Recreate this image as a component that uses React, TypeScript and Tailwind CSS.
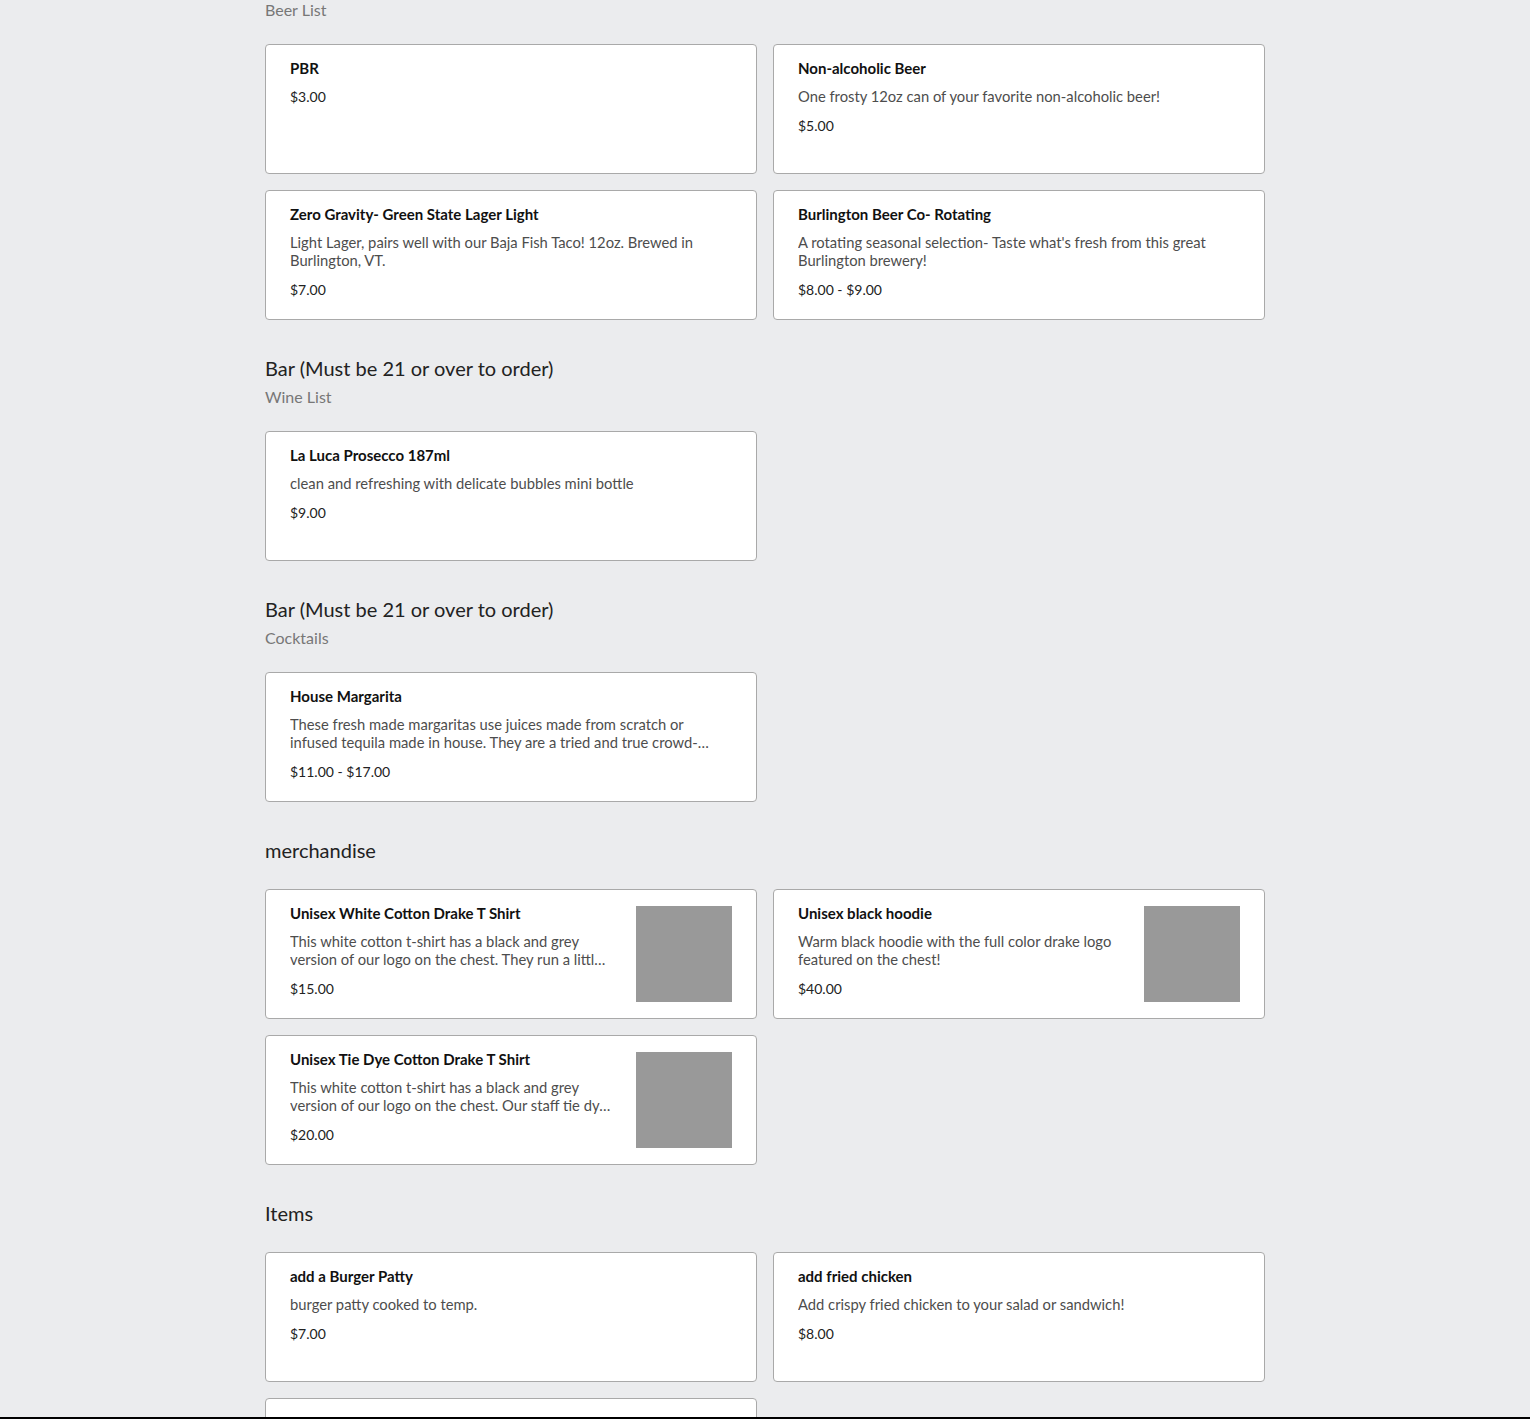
import React from "react";

type Item = {
  name: string;
  description?: string;
  price: string;
  image?: boolean;
};

type Section = {
  title: string;
  subtitle?: string;
  items: Item[];
};

const sections: Section[] = [
  {
    title: "Bar (Must be 21 or over to order)",
    subtitle: "Beer List",
    items: [
      { name: "PBR", price: "$3.00" },
      {
        name: "Non-alcoholic Beer",
        description: "One frosty 12oz can of your favorite non-alcoholic beer!",
        price: "$5.00",
      },
      {
        name: "Zero Gravity- Green State Lager Light",
        description:
          "Light Lager, pairs well with our Baja Fish Taco! 12oz. Brewed in Burlington, VT.",
        price: "$7.00",
      },
      {
        name: "Burlington Beer Co- Rotating",
        description:
          "A rotating seasonal selection- Taste what's fresh from this great Burlington brewery!",
        price: "$8.00 - $9.00",
      },
    ],
  },
  {
    title: "Bar (Must be 21 or over to order)",
    subtitle: "Wine List",
    items: [
      {
        name: "La Luca Prosecco 187ml",
        description: "clean and refreshing with delicate bubbles mini bottle",
        price: "$9.00",
      },
    ],
  },
  {
    title: "Bar (Must be 21 or over to order)",
    subtitle: "Cocktails",
    items: [
      {
        name: "House Margarita",
        description:
          "These fresh made margaritas use juices made from scratch or infused tequila made in house. They are a tried and true crowd-pleaser, available by the glass or pitcher.",
        price: "$11.00 - $17.00",
      },
    ],
  },
  {
    title: "merchandise",
    items: [
      {
        name: "Unisex White Cotton Drake T Shirt",
        description:
          "This white cotton t-shirt has a black and grey version of our logo on the chest. They run a little small, so size up if in doubt.",
        price: "$15.00",
        image: true,
      },
      {
        name: "Unisex black hoodie",
        description:
          "Warm black hoodie with the full color drake logo featured on the chest!",
        price: "$40.00",
        image: true,
      },
      {
        name: "Unisex Tie Dye Cotton Drake T Shirt",
        description:
          "This white cotton t-shirt has a black and grey version of our logo on the chest. Our staff tie dye each one by hand.",
        price: "$20.00",
        image: true,
      },
    ],
  },
  {
    title: "Items",
    items: [
      {
        name: "add a Burger Patty",
        description: "burger patty cooked to temp.",
        price: "$7.00",
      },
      {
        name: "add fried chicken",
        description: "Add crispy fried chicken to your salad or sandwich!",
        price: "$8.00",
      },
      {
        name: "Side Slaw",
        description: "house made coleslaw",
        price: "$3.00",
      },
    ],
  },
];

function ItemCard({ item }: { item: Item }) {
  return (
    <div className="flex h-[130px] gap-6 overflow-hidden rounded-[4px] border border-[#a9a9a9] bg-white px-6 pt-[14px]">
      <div className="min-w-0 flex-1">
        <div className="mb-[10px] text-[15px] leading-[18px] font-bold text-[#111]">
          {item.name}
        </div>
        {item.description && (
          <p className="mb-[11px] line-clamp-2 text-[14.75px] leading-[18px] text-[#4d4d4d]">
            {item.description}
          </p>
        )}
        <div className="text-[14px] leading-5 text-[#222]">{item.price}</div>
      </div>
      {item.image && (
        <div className="mt-[2px] h-24 w-24 shrink-0 bg-[#999]" />
      )}
    </div>
  );
}

export default function App() {
  return (
    <div
      className="min-h-screen bg-[#ebecee]"
      style={{ fontFamily: "Lato, 'Open Sans', sans-serif" }}
    >
      <main className="mx-auto -mt-[35px] w-[1000px] pb-10">
        {sections.map((section, i) => (
          <section key={i} className={i === 0 ? "" : "mt-8"}>
            <div className="mb-[22px]">
              <h2 className="text-[20px] leading-[33px] text-[#222]">
                {section.title}
              </h2>
              {section.subtitle && (
                <div className="text-[16px] leading-6 text-[#777]">
                  {section.subtitle}
                </div>
              )}
            </div>
            <div className="grid grid-cols-2 gap-4">
              {section.items.map((item) => (
                <ItemCard key={item.name} item={item} />
              ))}
            </div>
          </section>
        ))}
      </main>
      <div className="fixed inset-x-0 bottom-0 h-[2px] bg-black" />
    </div>
  );
}
